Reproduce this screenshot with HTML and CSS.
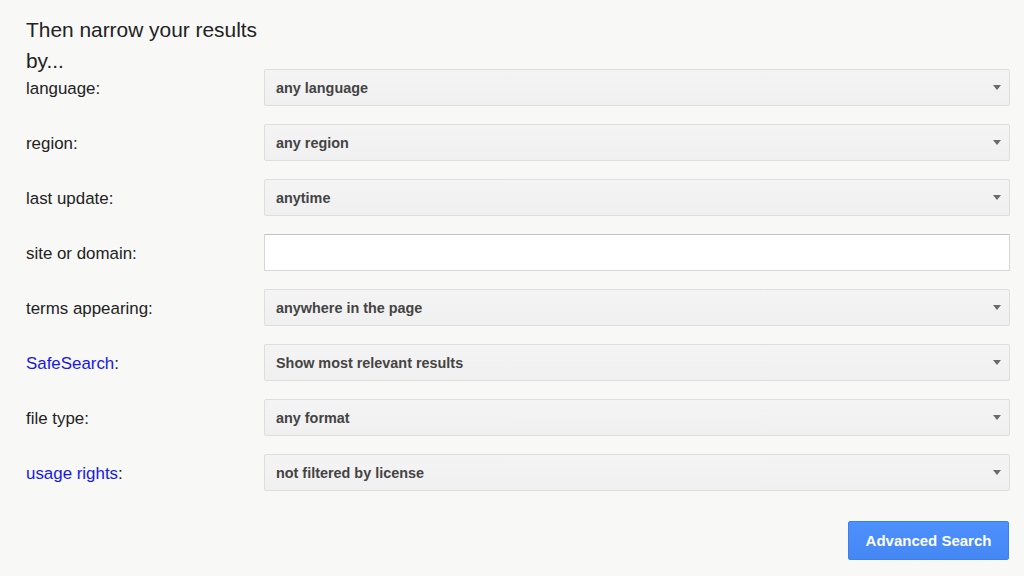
FILE: index.html
```html
<!DOCTYPE html>
<html lang="en">
<head>
<meta charset="utf-8">
<title>Advanced Search</title>
<link rel="stylesheet" href="styles.css">
</head>
<body>
<div class="page">
  <h2 class="heading">Then narrow your results by...</h2>
  <div class="rows">
    <div class="row">
      <div class="label">language:</div>
      <div class="select"><span>any language</span><i class="arrow"></i></div>
    </div>
    <div class="row">
      <div class="label">region:</div>
      <div class="select"><span>any region</span><i class="arrow"></i></div>
    </div>
    <div class="row">
      <div class="label">last update:</div>
      <div class="select"><span>anytime</span><i class="arrow"></i></div>
    </div>
    <div class="row">
      <div class="label">site or domain:</div>
      <div class="input"></div>
    </div>
    <div class="row">
      <div class="label">terms appearing:</div>
      <div class="select"><span>anywhere in the page</span><i class="arrow"></i></div>
    </div>
    <div class="row">
      <div class="label"><a class="link" href="#">SafeSearch</a>:</div>
      <div class="select"><span>Show most relevant results</span><i class="arrow"></i></div>
    </div>
    <div class="row">
      <div class="label">file type:</div>
      <div class="select"><span>any format</span><i class="arrow"></i></div>
    </div>
    <div class="row">
      <div class="label"><a class="link" href="#">usage rights</a>:</div>
      <div class="select"><span>not filtered by license</span><i class="arrow"></i></div>
    </div>
  </div>
  <div class="actions">
    <button class="btn">Advanced Search</button>
  </div>
</div>
</body>
</html>
```
FILE: styles.css
```css
html, body {
  margin: 0;
  padding: 0;
  background: #f8f8f7;
  font-family: "Liberation Sans", Arial, sans-serif;
  color: #222;
}
.page {
  width: 1024px;
  height: 576px;
  box-sizing: border-box;
  padding: 14px 14px 0 26px;
  overflow: hidden;
}
.heading {
  margin: 0 0 -7px 0;
  width: 238px;
  font-size: 20.9px;
  font-weight: normal;
  line-height: 31px;
  color: #222;
}
.rows {
  display: flex;
  flex-direction: column;
  gap: 18px;
}
.row {
  display: flex;
  align-items: center;
  height: 37px;
}
.label {
  width: 238px;
  flex: none;
  font-size: 16.9px;
  line-height: 37px;
  padding-top: 1px;
  color: #222;
}
.link {
  color: #1717e6;
  text-decoration: none;
}
.select {
  flex: none;
  width: 746px;
  height: 37px;
  box-sizing: border-box;
  border: 1px solid #dedede;
  border-radius: 2px;
  background: linear-gradient(#f4f4f4, #f0f0f0);
  display: flex;
  align-items: center;
  justify-content: space-between;
  padding: 0 8px 0 11px;
  font-size: 14.4px;
  font-weight: bold;
  color: #444;
}
.arrow {
  width: 0;
  height: 0;
  border-left: 4.5px solid transparent;
  border-right: 4.5px solid transparent;
  border-top: 5px solid #6a6a6a;
}
.input {
  flex: none;
  width: 746px;
  height: 37px;
  box-sizing: border-box;
  background: #fff;
  border: 1px solid #d6d6d6;
  border-top-color: #c2c2c2;
  border-radius: 1px;
}
.actions {
  display: flex;
  justify-content: flex-end;
  margin-top: 30px;
  padding-right: 1px;
}
.btn {
  width: 161px;
  height: 39px;
  border: 1px solid #3a7ff0;
  border-radius: 2px;
  background: linear-gradient(#4d90fe, #4587f3);
  color: #fff;
  font-family: "Liberation Sans", Arial, sans-serif;
  font-size: 15px;
  font-weight: bold;
  padding: 0;
  cursor: pointer;
}
```
